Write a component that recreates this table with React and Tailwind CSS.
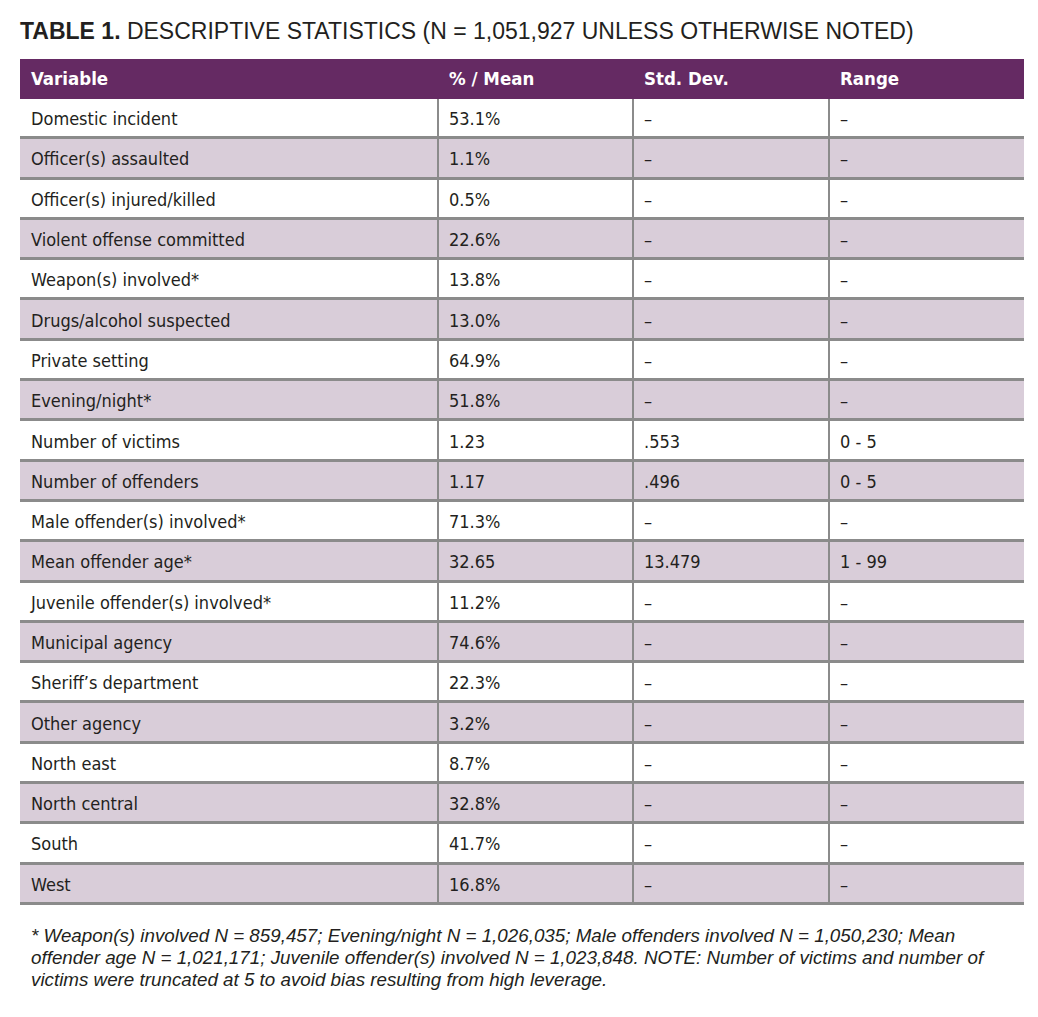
import React from "react";

const rows = [
  ["Domestic incident", "53.1%", "–", "–"],
  ["Officer(s) assaulted", "1.1%", "–", "–"],
  ["Officer(s) injured/killed", "0.5%", "–", "–"],
  ["Violent offense committed", "22.6%", "–", "–"],
  ["Weapon(s) involved*", "13.8%", "–", "–"],
  ["Drugs/alcohol suspected", "13.0%", "–", "–"],
  ["Private setting", "64.9%", "–", "–"],
  ["Evening/night*", "51.8%", "–", "–"],
  ["Number of victims", "1.23", ".553", "0 - 5"],
  ["Number of offenders", "1.17", ".496", "0 - 5"],
  ["Male offender(s) involved*", "71.3%", "–", "–"],
  ["Mean offender age*", "32.65", "13.479", "1 - 99"],
  ["Juvenile offender(s) involved*", "11.2%", "–", "–"],
  ["Municipal agency", "74.6%", "–", "–"],
  ["Sheriff’s department", "22.3%", "–", "–"],
  ["Other agency", "3.2%", "–", "–"],
  ["North east", "8.7%", "–", "–"],
  ["North central", "32.8%", "–", "–"],
  ["South", "41.7%", "–", "–"],
  ["West", "16.8%", "–", "–"],
];

export default function App() {
  return (
    <div className="w-[1038px] h-[1017px] bg-white text-[#231f20] pt-[17px] px-[20px]">
      <h1 className="font-['Liberation_Sans',Arial,sans-serif] text-[23px] leading-[29px] whitespace-nowrap">
        <span className="font-bold">TABLE 1.</span> DESCRIPTIVE STATISTICS (N = 1,051,927 UNLESS OTHERWISE NOTED)
      </h1>
      <div className="mt-[13px] w-[1004px] font-['DejaVu_Sans_Condensed','DejaVu_Sans',sans-serif]">
        <div className="grid grid-cols-[417px_195px_196px_196px] h-[40px] bg-[#652a63] text-white font-bold text-[18.5px] items-center">
          <div className="pl-[11px]">Variable</div>
          <div className="pl-[12px]">% / Mean</div>
          <div className="pl-[12px]">Std. Dev.</div>
          <div className="pl-[12px]">Range</div>
        </div>
        {rows.map((r, i) => (
          <div
            key={i}
            className={`grid grid-cols-[417px_195px_196px_196px] h-[40.3px] border-b-[3px] border-[#8b8b8b] text-[18px] ${
              i % 2 === 1 ? "bg-[#d9cdd9]" : "bg-white"
            }`}
          >
            <div className="pl-[11px] flex items-center pt-[2px]">{r[0]}</div>
            <div className="pl-[10px] flex items-center pt-[2px] border-l-[2px] border-[#8b8b8b]">{r[1]}</div>
            <div className="pl-[10px] flex items-center pt-[2px] border-l-[2px] border-[#8b8b8b]">{r[2]}</div>
            <div className="pl-[10px] flex items-center pt-[2px] border-l-[2px] border-[#8b8b8b]">{r[3]}</div>
          </div>
        ))}
      </div>
      <p className="mt-[20px] pl-[11px] italic font-['Liberation_Sans',Arial,sans-serif] text-[18.8px] leading-[22px] text-[#231f20] whitespace-nowrap">
        * Weapon(s) involved N = 859,457; Evening/night N = 1,026,035; Male offenders involved N = 1,050,230; Mean
        <br />
        offender age N = 1,021,171; Juvenile offender(s) involved N = 1,023,848. NOTE: Number of victims and number of
        <br />
        victims were truncated at 5 to avoid bias resulting from high leverage.
      </p>
    </div>
  );
}
